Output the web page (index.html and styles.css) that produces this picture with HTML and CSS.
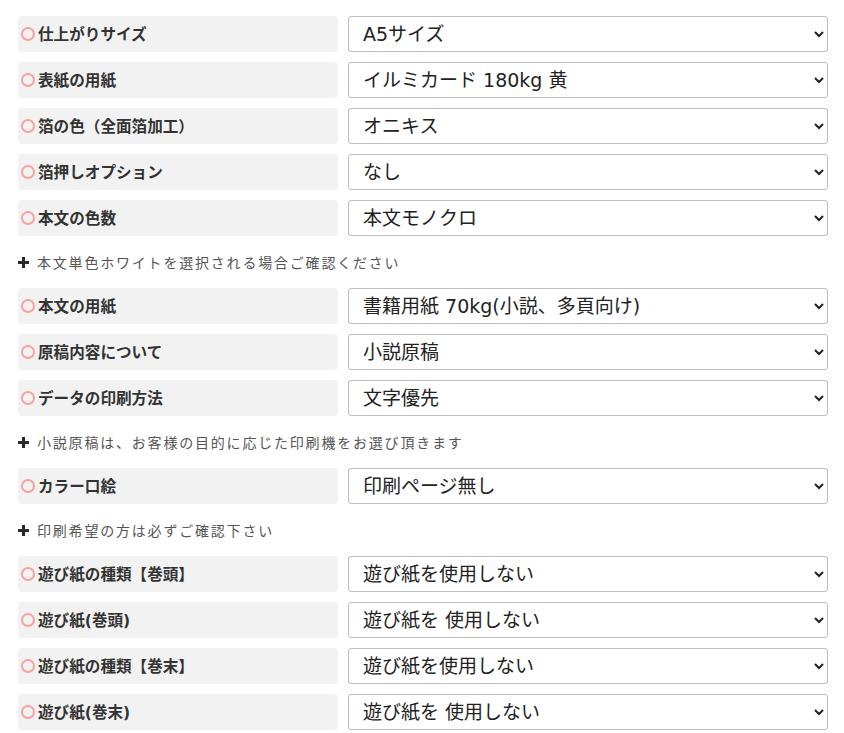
FILE: index.html
```html
<!DOCTYPE html>
<html lang="ja">
<head>
  <meta charset="UTF-8">
  <meta name="viewport" content="width=device-width, initial-scale=1.0">
  <title>仕様選択</title>
  <link rel="stylesheet" href="styles.css">
</head>
<body>
  <div class="form">
    <div class="row">
      <div class="label"><span class="mark"></span><span>仕上がりサイズ</span></div>
      <select><option>A5サイズ</option></select>
    </div>
    <div class="row">
      <div class="label"><span class="mark"></span><span>表紙の用紙</span></div>
      <select><option>イルミカード 180kg 黄</option></select>
    </div>
    <div class="row">
      <div class="label"><span class="mark"></span><span>箔の色（全面箔加工）</span></div>
      <select><option>オニキス</option></select>
    </div>
    <div class="row">
      <div class="label"><span class="mark"></span><span>箔押しオプション</span></div>
      <select><option>なし</option></select>
    </div>
    <div class="row">
      <div class="label"><span class="mark"></span><span>本文の色数</span></div>
      <select><option>本文モノクロ</option></select>
    </div>
    <div class="note">
      <svg class="plus" width="11" height="11" viewBox="0 0 11 11"><rect x="4" y="0" width="3" height="11"/><rect x="0" y="4" width="11" height="3"/></svg>
      本文単色ホワイトを選択される場合ご確認ください
    </div>
    <div class="row">
      <div class="label"><span class="mark"></span><span>本文の用紙</span></div>
      <select><option>書籍用紙 70kg(小説、多頁向け)</option></select>
    </div>
    <div class="row">
      <div class="label"><span class="mark"></span><span>原稿内容について</span></div>
      <select><option>小説原稿</option></select>
    </div>
    <div class="row">
      <div class="label"><span class="mark"></span><span>データの印刷方法</span></div>
      <select><option>文字優先</option></select>
    </div>
    <div class="note">
      <svg class="plus" width="11" height="11" viewBox="0 0 11 11"><rect x="4" y="0" width="3" height="11"/><rect x="0" y="4" width="11" height="3"/></svg>
      小説原稿は、お客様の目的に応じた印刷機をお選び頂きます
    </div>
    <div class="row">
      <div class="label"><span class="mark"></span><span>カラー口絵</span></div>
      <select><option>印刷ページ無し</option></select>
    </div>
    <div class="note">
      <svg class="plus" width="11" height="11" viewBox="0 0 11 11"><rect x="4" y="0" width="3" height="11"/><rect x="0" y="4" width="11" height="3"/></svg>
      印刷希望の方は必ずご確認下さい
    </div>
    <div class="row">
      <div class="label"><span class="mark"></span><span>遊び紙の種類【巻頭】</span></div>
      <select><option>遊び紙を使用しない</option></select>
    </div>
    <div class="row">
      <div class="label"><span class="mark"></span><span>遊び紙(巻頭)</span></div>
      <select><option>遊び紙を 使用しない</option></select>
    </div>
    <div class="row">
      <div class="label"><span class="mark"></span><span>遊び紙の種類【巻末】</span></div>
      <select><option>遊び紙を使用しない</option></select>
    </div>
    <div class="row">
      <div class="label"><span class="mark"></span><span>遊び紙(巻末)</span></div>
      <select><option>遊び紙を 使用しない</option></select>
    </div>
  </div>
</body>
</html>
```

FILE: styles.css
```css
body {
  margin: 0;
  background: #ffffff;
  font-family: "Noto Sans CJK JP", "Noto Sans", sans-serif;
  color: #333;
}

.form {
  padding: 16px 0 0 18px;
  width: 810px;
}

.row {
  display: grid;
  grid-template-columns: 320px 480px;
  column-gap: 10px;
  height: 36px;
  margin-bottom: 10px;
}

.label {
  background: #f2f2f2;
  border-radius: 4px;
  display: flex;
  align-items: center;
  padding-left: 3px;
  font-family: "DejaVu Sans", "Noto Sans CJK JP", sans-serif;
  font-size: 15.6px;
  line-height: 1;
  font-weight: bold;
  color: #333;
}

.label span:last-child {
  padding-top: 3px;
}

.mark {
  width: 10px;
  height: 10px;
  border: 2px solid #f7a1a1;
  border-radius: 50%;
  margin-right: 3px;
  flex-shrink: 0;
}

select {
  height: 36px;
  border: 1px solid #bdbdbd;
  border-radius: 3px;
  background: #fff;
  font-family: "DejaVu Sans", "Noto Sans CJK JP", sans-serif;
  font-size: 19px;
  color: #222;
  padding: 0 8px 0 10px;
}

.note {
  height: 32px;
  margin-bottom: 10px;
  display: flex;
  align-items: center;
  font-size: 14px;
  letter-spacing: 1.8px;
  color: #555;
}

.plus {
  fill: #2a2a2a;
  margin-right: 8px;
  flex-shrink: 0;
}
```
